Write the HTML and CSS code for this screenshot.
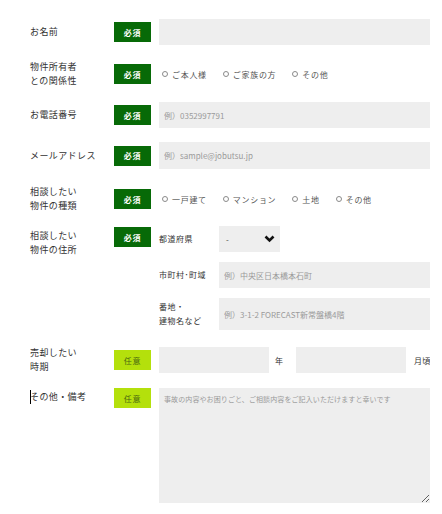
FILE: index.html
```html
<!DOCTYPE html>
<html lang="ja">
<head>
<meta charset="utf-8">
<link rel="stylesheet" href="styles.css">
</head>
<body>
<form class="form">
  <div class="row r1">
    <div class="label">お名前</div>
    <div class="badge req">必須</div>
    <input class="field" type="text">
  </div>

  <div class="row r2">
    <div class="label">物件所有者<br>との関係性</div>
    <div class="badge req">必須</div>
    <div class="radios">
      <span class="radio"><i class="circle"></i>ご本人様</span>
      <span class="radio"><i class="circle"></i>ご家族の方</span>
      <span class="radio"><i class="circle"></i>その他</span>
    </div>
  </div>

  <div class="row r3">
    <div class="label">お電話番号</div>
    <div class="badge req">必須</div>
    <input class="field" type="text" placeholder="例）0352997791">
  </div>

  <div class="row r4">
    <div class="label">メールアドレス</div>
    <div class="badge req">必須</div>
    <input class="field" type="text" placeholder="例）sample@jobutsu.jp">
  </div>

  <div class="row r5">
    <div class="label">相談したい<br>物件の種類</div>
    <div class="badge req">必須</div>
    <div class="radios">
      <span class="radio"><i class="circle"></i>一戸建て</span>
      <span class="radio"><i class="circle"></i>マンション</span>
      <span class="radio"><i class="circle"></i>土地</span>
      <span class="radio"><i class="circle"></i>その他</span>
    </div>
  </div>

  <div class="row r6 top">
    <div class="label">相談したい<br>物件の住所</div>
    <div class="badge req">必須</div>
    <div class="address">
      <div class="sublabel">都道府県</div>
      <div class="select">
        <span>-</span>
        <svg width="11" height="8" viewBox="0 0 11 8"><polyline points="1.5,1.5 5.5,5.5 9.5,1.5" fill="none" stroke="#111" stroke-width="2.6"/></svg>
      </div>
      <div class="sublabel">市町村･町域</div>
      <input class="field" type="text" placeholder="例）中央区日本橋本石町">
      <div class="sublabel">番地・<br>建物名など</div>
      <input class="field tall" type="text" placeholder="例）3-1-2 FORECAST新常盤橋4階">
    </div>
  </div>

  <div class="row r7">
    <div class="label">売却したい<br>時期</div>
    <div class="badge opt">任意</div>
    <div class="period">
      <input class="field small" type="text">
      <span class="unit">年</span>
      <input class="field small" type="text">
      <span class="unit last">月頃</span>
    </div>
  </div>

  <div class="row r8 top">
    <div class="label"><span class="caret"></span>その他・備考</div>
    <div class="badge opt">任意</div>
    <textarea class="area" placeholder="事故の内容やお困りごと、ご相談内容をご記入いただけますと幸いです"></textarea>
  </div>
</form>
</body>
</html>
```

FILE: styles.css
```css
* { box-sizing: border-box; }

body {
  margin: 0;
  background: #fff;
  font-family: "Noto Sans CJK JP", "Noto Sans", sans-serif;
  color: #333;
}

.form {
  display: flex;
  flex-direction: column;
  padding: 19px 12px 0 30px;
}

.row {
  display: grid;
  grid-template-columns: 84px 45px 271px;
  align-items: center;
}

.row.top { align-items: start; }

.r2 { margin-top: 15px; }
.r3 { margin-top: 14px; }
.r4 { margin-top: 14px; }
.r5 { margin-top: 16px; }
.r6 { margin-top: 13px; }
.r7 { margin-top: 16px; }
.r8 { margin-top: 14px; }

.label {
  font-size: 9px;
  line-height: 14px;
  letter-spacing: 0.4px;
  color: #333;
}

.r6 .label { margin-top: 3px; }
.r8 .label { margin-top: 2px; }

.caret {
  display: inline-block;
  width: 1px;
  height: 14px;
  background: #000;
  vertical-align: top;
  margin-right: -1px;
}

.badge {
  width: 37px;
  height: 20px;
  display: flex;
  align-items: center;
  justify-content: center;
  font-size: 8px;
  letter-spacing: 0.8px;
}

.badge.req {
  background: #076a07;
  color: #fff;
  font-weight: bold;
}

.badge.opt {
  background: #b4e00c;
  color: #4a6a10;
}

.r6 .badge { margin-top: 1px; }

.field {
  display: block;
  width: 100%;
  height: 26px;
  border: none;
  outline: none;
  background: #eeeeee;
  padding: 0 5px;
  font-family: inherit;
  font-size: 8px;
  color: #333;
  margin: 0;
}

.field::placeholder, .area::placeholder { color: #9a9a9a; }

.r4 .field { height: 27px; }

.radios {
  display: flex;
  align-items: center;
  gap: 16px;
  padding-left: 3px;
}

.radio {
  display: flex;
  align-items: center;
  gap: 4px;
  font-size: 8px;
  letter-spacing: 0.7px;
  color: #555;
}

.circle {
  width: 6px;
  height: 6px;
  border: 1px solid #8a8a8a;
  border-radius: 50%;
}

.address {
  display: grid;
  grid-template-columns: 60px 211px;
  row-gap: 10px;
  align-items: center;
}

.sublabel {
  font-size: 8px;
  line-height: 14px;
  letter-spacing: 0.5px;
  color: #333;
}

.select {
  width: 61px;
  height: 26px;
  background: #eeeeee;
  display: flex;
  align-items: center;
  justify-content: space-between;
  padding: 0 5px 0 7px;
  font-size: 8px;
  color: #444;
}

.field.tall { height: 32px; }

.period {
  display: flex;
  align-items: center;
  overflow: hidden;
}

.field.small { width: 110px; flex: none; }

.unit {
  flex: none;
  width: 27px;
  padding-left: 6px;
  font-size: 8px;
  color: #333;
}

.unit.last { width: auto; padding-left: 8px; white-space: nowrap; letter-spacing: 0.2px; }

.area {
  display: block;
  width: 271px;
  height: 115px;
  border: none;
  outline: none;
  background: #eeeeee;
  padding: 6px 5px;
  margin: 0;
  font-family: inherit;
  font-size: 7px;
  letter-spacing: 0.1px;
  resize: both;
}
```
